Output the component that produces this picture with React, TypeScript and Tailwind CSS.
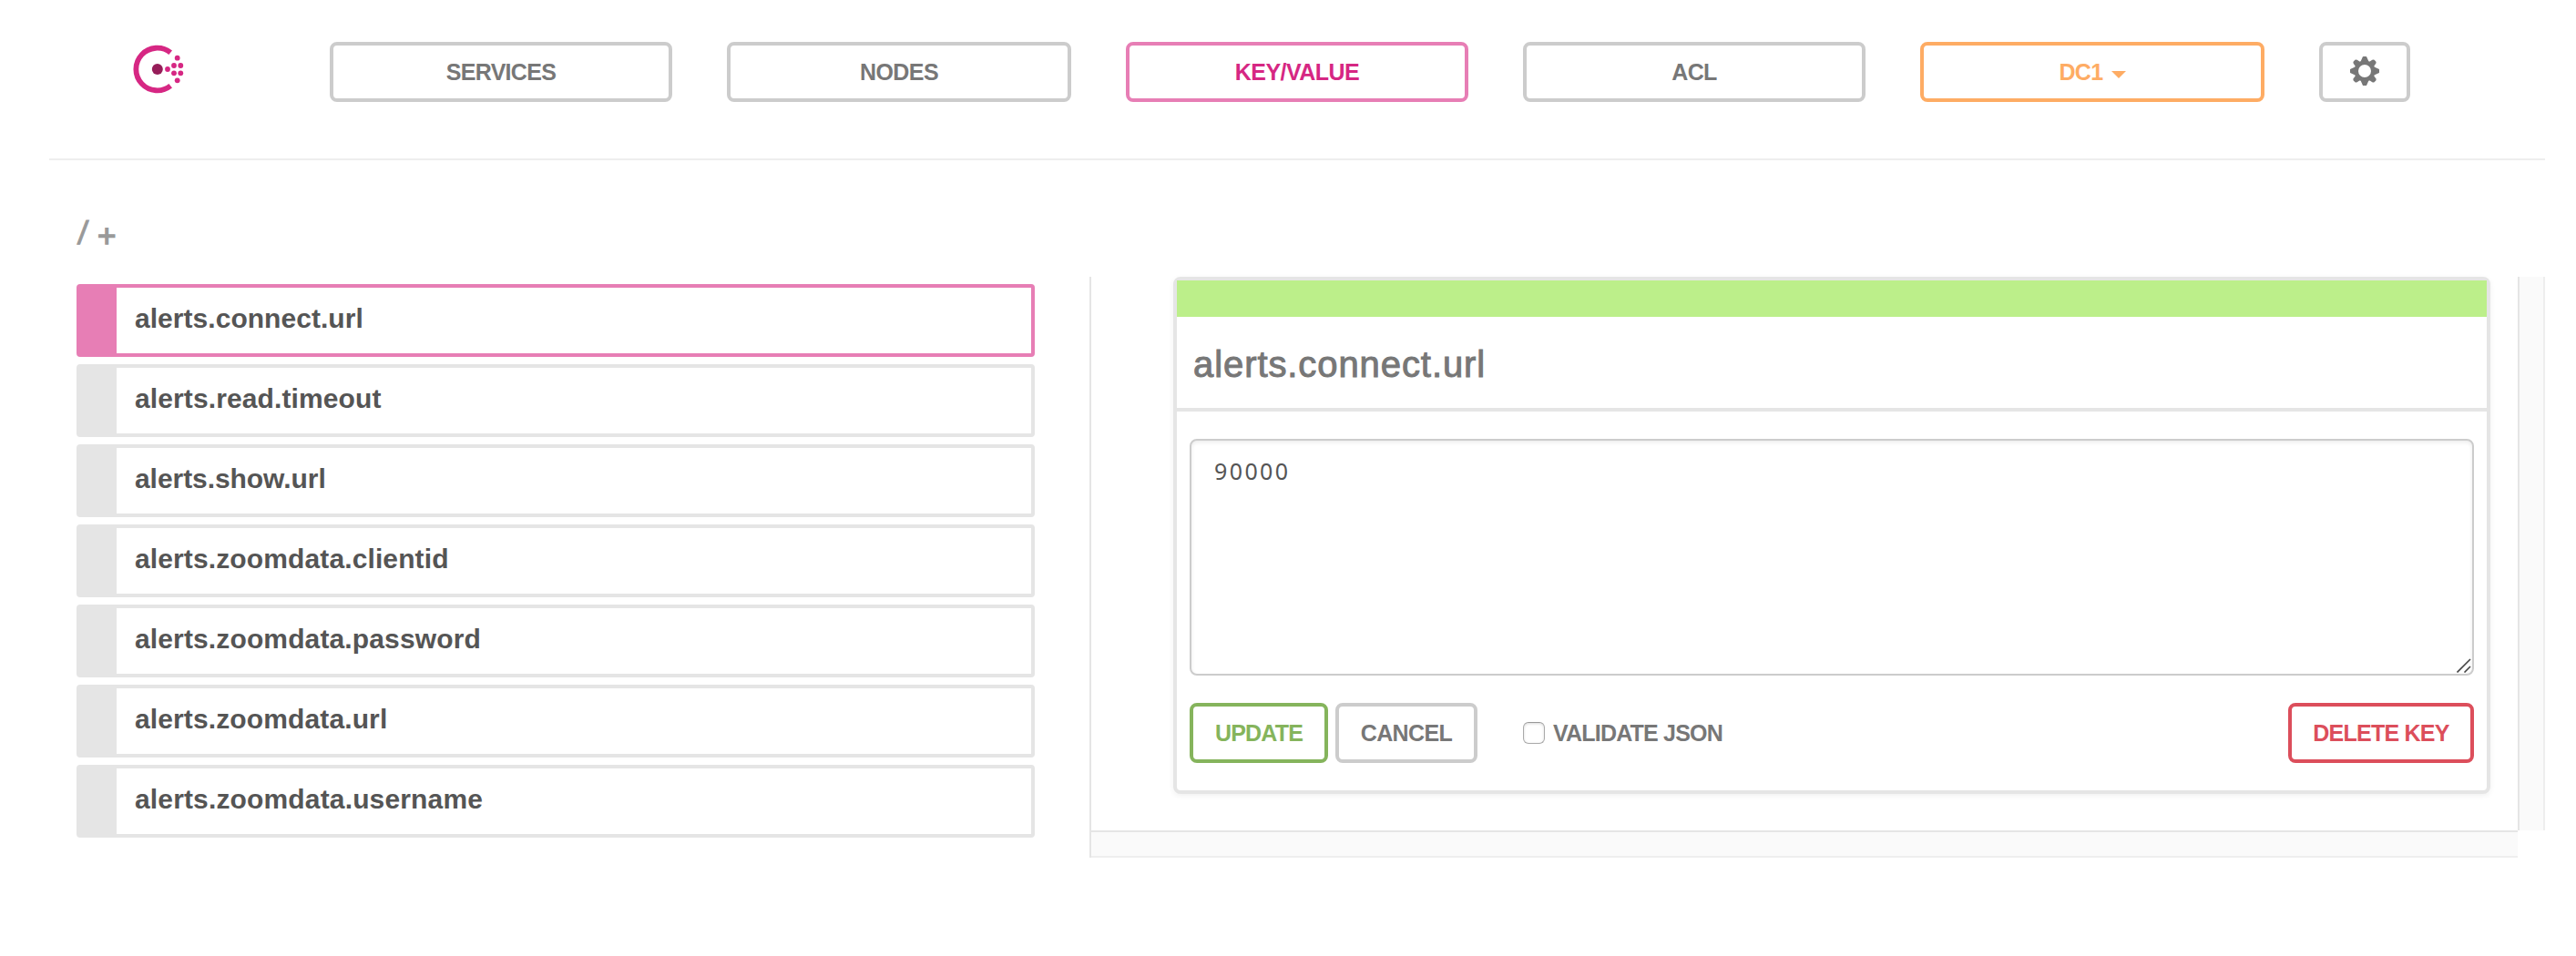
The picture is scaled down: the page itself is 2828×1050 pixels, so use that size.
import React from "react";

const keys = [
  { name: "alerts.connect.url", track: "tracking-[0.04px]" },
  { name: "alerts.read.timeout", track: "tracking-[0.11px]" },
  { name: "alerts.show.url", track: "tracking-[-0.06px]" },
  { name: "alerts.zoomdata.clientid", track: "tracking-[0.12px]" },
  { name: "alerts.zoomdata.password", track: "tracking-[0.13px]" },
  { name: "alerts.zoomdata.url", track: "tracking-[0.12px]" },
  { name: "alerts.zoomdata.username", track: "tracking-[0.15px]" },
];

const button =
  "flex h-[66px] shrink-0 items-center justify-center rounded-lg border-4 bg-white pt-px text-[25px] leading-none font-bold whitespace-nowrap";

function Logo() {
  return (
    <svg className="mt-[2px] ml-[92px] h-[56px] w-[58px] shrink-0" viewBox="0 0 58 56">
      <path d="M41.2 9.8A23.3 23.3 0 1 0 41.2 46.2" fill="none" stroke="#d62783" strokeWidth="5.8" />
      <circle cx="26.8" cy="28" r="6" fill="#961d59" />
      <g fill="#d62783">
        <circle cx="38" cy="28" r="2.9" />
        <circle cx="45" cy="24" r="2.9" />
        <circle cx="45" cy="32.3" r="2.9" />
        <circle cx="52.3" cy="24" r="2.9" />
        <circle cx="52.3" cy="32.3" r="2.9" />
        <circle cx="48.7" cy="15.7" r="2.9" />
        <circle cx="48.7" cy="40.3" r="2.9" />
      </g>
    </svg>
  );
}

function Gear() {
  return (
    <svg className="-mt-[3px] size-8" viewBox="-16 -16 32 32" fill="#777">
      <path
        fillRule="evenodd"
        d="M11.6 0A11.6 11.6 0 1 1 -11.6 0A11.6 11.6 0 1 1 11.6 0ZM7 0A7 7 0 1 0 -7 0A7 7 0 1 0 7 0Z"
      />
      {[0, 90, 180, 270].map((a) => (
        <path key={a} transform={`rotate(${a})`} d="M-4.4 -10.5L-2.2 -15.4Q-2 -16 -1.4 -16H1.4Q2 -16 2.2 -15.4L4.4 -10.5Z" />
      ))}
      {[45, 135, 225, 315].map((a) => (
        <path key={a} transform={`rotate(${a})`} d="M-3.6 -10.5L-2.8 -14.6Q-2.4 -15.9 -1.2 -16.1H1.2Q2.4 -15.9 2.8 -14.6L3.6 -10.5Z" />
      ))}
    </svg>
  );
}

function Header() {
  return (
    <header className="ml-[54px] flex h-[176px] w-[2740px] items-start border-b-2 border-[#eee] pt-[46px] text-[#777]">
      <Logo />
      <nav className="ml-[158px] flex">
        <a className={`${button} mr-[60px] w-[376px] border-[#ccc]`}>
          <span className="tracking-[-0.7px]">SERVICES</span>
        </a>
        <a className={`${button} mr-[60px] w-[378px] border-[#ccc]`}>
          <span className="tracking-[-0.6px]">NODES</span>
        </a>
        <a className={`${button} mr-[60px] w-[376px] border-[#e77eb5] text-[#d62783]`}>
          <span className="tracking-[-0.55px]">KEY/VALUE</span>
        </a>
        <a className={`${button} mr-[60px] w-[376px] border-[#ccc]`}>
          <span className="tracking-[-0.7px]">ACL</span>
        </a>
        <a className={`${button} mr-[60px] w-[378px] border-[#feac64] text-[#feac64]`}>
          <span className="tracking-[-0.6px]">DC1</span>
          <span className="mt-[5px] ml-[9px] border-x-8 border-t-8 border-x-transparent border-t-[#feac64]" />
        </a>
        <a className={`${button} w-[100px] border-[#ccc]`}>
          <Gear />
        </a>
      </nav>
    </header>
  );
}

function KeyList() {
  return (
    <ul className="mt-2 flex w-[1052px] flex-col gap-2">
      {keys.map((k, i) => (
        <li
          key={k.name}
          className={`flex h-20 rounded border-4 border-l-[44px] bg-white pl-5 text-[30px] leading-[68px] font-bold text-[#555] ${
            i === 0 ? "border-[#e77eb5]" : "border-[#e5e5e5]"
          }`}
        >
          <span className={k.track}>{k.name}</span>
        </li>
      ))}
    </ul>
  );
}

function Editor() {
  return (
    <div className="h-[568px] w-[1446px] rounded-lg border-4 border-[#e5e5e5] bg-white text-[#777] shadow-[0_2px_6px_rgba(0,0,0,0.06)]">
      <div className="h-10 bg-[#bcef8a]" />
      <h3 className="h-[104px] border-b-4 border-[#e5e5e5] pl-[18px] text-[40px] leading-[104px] tracking-[0.92px] [-webkit-text-stroke:1px_#777]">
        alerts.connect.url
      </h3>
      <div className="flex flex-col px-3.5 pt-[30px]">
        <div className="relative h-[260px]">
          <textarea
            className="block h-full w-full resize-none rounded-lg border-2 border-[#ccc] px-[25px] pt-[13px] font-['Noto_Sans',sans-serif] text-[25px] leading-[40px] tracking-[2.4px] text-[#555] shadow-[inset_0_2px_4px_rgba(0,0,0,0.08)] outline-none"
            defaultValue="90000"
          />
          <svg className="absolute right-[3px] bottom-[3px] size-4" viewBox="0 0 16 16" stroke="#444" strokeWidth="1.6">
            <path d="M0.5 15.5L15 1M8.5 15.5L15 9" />
          </svg>
        </div>
        <div className="mt-[30px] flex items-center">
          <button className={`${button} w-[152px] border-[#85b45c] text-[#85b45c]`}>
            <span className="tracking-[-0.8px]">UPDATE</span>
          </button>
          <button className={`${button} ml-2 w-[156px] border-[#ccc]`}>
            <span className="tracking-[-0.6px]">CANCEL</span>
          </button>
          <label className="ml-[50px] flex items-center text-[25px] leading-none font-bold">
            <span className="size-6 rounded-md border border-[#aaa] border-t-[#999] bg-white shadow-[inset_0_1px_3px_rgba(0,0,0,0.15)]" />
            <span className="ml-[9px] pt-px tracking-[-0.8px]">VALIDATE JSON</span>
          </label>
          <button className={`${button} ml-auto w-[204px] border-[#dc4e5b] text-[#dc4e5b]`}>
            <span className="tracking-[-0.75px]">DELETE KEY</span>
          </button>
        </div>
      </div>
    </div>
  );
}

export default function App() {
  return (
    <div className="h-[1050px] w-[2828px] overflow-hidden bg-white font-['Liberation_Sans',Arial,sans-serif]">
      <Header />
      <main className="flex pl-[84px]">
        <section className="w-[1112px]">
          <h4 className="flex h-[128px] items-start pt-[60px] text-4xl text-[#999] [-webkit-text-stroke:1px_#999]">
            <span className="ml-0.5 -skew-x-[6deg]">/</span>
            <span className="mt-1 ml-[11px] text-[35px] [-webkit-text-stroke:1.4px_#999]">+</span>
          </h4>
          <KeyList />
        </section>
        <section className="mt-[128px] grid grid-cols-[1568px_30px] grid-rows-[608px_30px]">
          <div className="border-l-2 border-[#e5e5e5] pl-[90px]">
            <Editor />
          </div>
          <div className="border-x-2 border-r-[#eee] border-l-[#e5e5e5] bg-[#fafafa]" />
          <div className="border-l-2 border-[#e5e5e5]">
            <div className="h-full border-y-2 border-t-[#e5e5e5] border-b-[#eee] bg-[#fafafa]" />
          </div>
        </section>
      </main>
    </div>
  );
}
